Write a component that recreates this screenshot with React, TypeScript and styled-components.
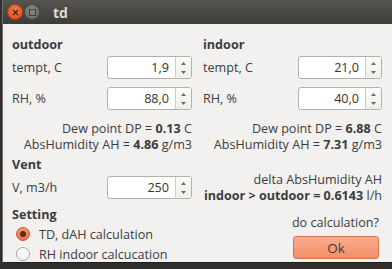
import React from 'react';
import styled, { createGlobalStyle } from 'styled-components';

const GlobalStyle = createGlobalStyle`
  html, body {
    margin: 0;
    padding: 0;
    background: #2f2f2d;
  }
  body {
    font-family: "Open Sans", "Noto Sans", sans-serif;
    font-size: 12.6px;
    color: #3c3c3c;
  }
`;

const Window = styled.div`
  width: 390px;
  height: 263px;
  margin-left: 2px;
  border-left: 1px solid #6f6e6a;
  border-bottom: 1px solid #1e1e1c;
  background: #f2f1f0;
  overflow: hidden;
  box-sizing: border-box;
`;

const TitleBar = styled.div`
  height: 24px;
  display: flex;
  align-items: center;
  padding-left: 4px;
  background: linear-gradient(#56544f, #3d3c38);
`;

const WinButton = styled.div<{ $kind: 'close' | 'min' }>`
  flex: none;
  width: 16px;
  height: 16px;
  margin-right: 1px;
  border-radius: 50%;
  display: flex;
  align-items: center;
  justify-content: center;
  background: ${({ $kind }) =>
    $kind === 'close'
      ? 'radial-gradient(circle at 50% 35%, #f47a4c, #de4a17)'
      : 'radial-gradient(circle at 50% 35%, #8a8984, #66655f)'};
  border: 1px solid ${({ $kind }) => ($kind === 'close' ? '#b23c11' : '#4a4945')};
  box-sizing: border-box;
`;

const Title = styled.span`
  margin-left: 12px;
  font-weight: bold;
  font-size: 14px;
  color: #dfdbd2;
`;

const Body = styled.div`
  display: grid;
  grid-template-columns: 180px 179px;
  column-gap: 11px;
  padding: 13px 0 0 9px;
`;

const Column = styled.div`
  display: flex;
  flex-direction: column;
`;

const Heading = styled.div<{ $mt?: number }>`
  font-weight: bold;
  height: 16px;
  line-height: 16px;
  margin-top: ${({ $mt }) => $mt ?? 0}px;
`;

const Row = styled.div<{ $mt: number }>`
  display: flex;
  align-items: center;
  justify-content: space-between;
  margin-top: ${({ $mt }) => $mt}px;
  height: 23px;
`;

const SpinBox = styled.div<{ $w: number }>`
  width: ${({ $w }) => $w}px;
  height: 23px;
  display: flex;
  border: 1px solid #b4b1ab;
  border-radius: 3px;
  box-sizing: border-box;
  background: #fff;
  overflow: hidden;
`;

const SpinValue = styled.div`
  flex: 1;
  text-align: right;
  padding-right: 6px;
  line-height: 21px;
  color: #333;
`;

const SpinArrows = styled.div`
  width: 16px;
  border-left: 1px solid #cfccc7;
  background: linear-gradient(#fbfbfa, #efeeec);
  display: flex;
  flex-direction: column;
  justify-content: space-between;
  align-items: center;
  padding: 5px 0 4px;
  box-sizing: border-box;
`;

const Lines = styled.div<{ $mt: number }>`
  margin-top: ${({ $mt }) => $mt}px;
  display: flex;
  flex-direction: column;
  align-items: flex-end;
  line-height: 16px;
  white-space: nowrap;
`;

const RadioRow = styled.div<{ $mt?: number }>`
  display: flex;
  align-items: center;
  height: 20px;
  gap: 9px;
  padding-left: 4px;
  white-space: nowrap;
  margin-top: ${({ $mt }) => $mt ?? 0}px;
`;

const Radio = styled.div<{ $on?: boolean }>`
  flex: none;
  width: 14px;
  height: 14px;
  border-radius: 50%;
  box-sizing: border-box;
  display: flex;
  align-items: center;
  justify-content: center;
  border: 1px solid ${({ $on }) => ($on ? '#c9572d' : '#a9a6a1')};
  background: ${({ $on }) => ($on ? 'linear-gradient(#f79a74, #ec6f42)' : 'linear-gradient(#ffffff, #f3f2f0)')};
`;

const Dot = styled.div`
  width: 6px;
  height: 6px;
  border-radius: 50%;
  background: #5a2a1a;
`;

const Prompt = styled.div`
  margin-top: 11px;
  text-align: right;
  line-height: 16px;
  padding-right: 3px;
`;

const OkButton = styled.button`
  margin-top: 5px;
  margin-left: 90px;
  width: 86px;
  height: 23px;
  border: 1px solid #d57250;
  border-radius: 3px;
  background: linear-gradient(#fbac90, #f38e68);
  font-family: inherit;
  font-size: 13.5px;
  color: #3c3c3c;
  padding: 0;
`;

const Arrow = ({ up }: { up?: boolean }) => (
  <svg width="5" height="3" viewBox="0 0 5 3">
    <path d={up ? 'M0 3 L2.5 0 L5 3' : 'M0 0 L2.5 3 L5 0'} fill="#6a6965" />
  </svg>
);

const Spin = ({ value, w }: { value: string; w: number }) => (
  <SpinBox $w={w}>
    <SpinValue>{value}</SpinValue>
    <SpinArrows>
      <Arrow up />
      <Arrow />
    </SpinArrows>
  </SpinBox>
);

const App: React.FC = () => {
  return (
    <>
      <GlobalStyle />
      <Window>
        <TitleBar>
          <WinButton $kind="close">
            <svg width="7" height="7" viewBox="0 0 7 7">
              <path d="M1 1 L6 6 M6 1 L1 6" stroke="#3a1a0c" strokeWidth="1.1" />
            </svg>
          </WinButton>
          <WinButton $kind="min">
            <svg width="7" height="7" viewBox="0 0 7 7">
              <rect x="0.5" y="0.5" width="6" height="6" fill="none" stroke="#3d3c38" />
            </svg>
          </WinButton>
          <Title>td</Title>
        </TitleBar>
        <Body>
          <Column>
            <Heading>outdoor</Heading>
            <Row $mt={3}>
              <span>tempt, C</span>
              <Spin value="1,9" w={85} />
            </Row>
            <Row $mt={8}>
              <span>RH, %</span>
              <Spin value="88,0" w={85} />
            </Row>
            <Lines $mt={11}>
              <div>Dew point DP = <b>0.13</b> C</div>
              <div>AbsHumidity AH = <b>4.86</b> g/m3</div>
            </Lines>
            <Heading $mt={4}>Vent</Heading>
            <Row $mt={3}>
              <span>V, m3/h</span>
              <Spin value="250" w={85} />
            </Row>
            <Heading $mt={8}>Setting</Heading>
            <RadioRow $mt={1}>
              <Radio $on>
                <Dot />
              </Radio>
              <span>TD, dAH calculation</span>
            </RadioRow>
            <RadioRow>
              <Radio />
              <span>RH indoor calcucation</span>
            </RadioRow>
          </Column>
          <Column>
            <Heading>indoor</Heading>
            <Row $mt={3}>
              <span>tempt, C</span>
              <Spin value="21,0" w={84} />
            </Row>
            <Row $mt={8}>
              <span>RH, %</span>
              <Spin value="40,0" w={84} />
            </Row>
            <Lines $mt={11}>
              <div>Dew point DP = <b>6.88</b> C</div>
              <div>AbsHumidity AH = <b>7.31</b> g/m3</div>
            </Lines>
            <Lines $mt={19}>
              <div>delta AbsHumidity AH</div>
              <div><b>indoor &gt; outdoor = 0.6143</b> l/h</div>
            </Lines>
            <Prompt>do calculation?</Prompt>
            <OkButton>Ok</OkButton>
          </Column>
        </Body>
      </Window>
    </>
  );
};

export default App;
